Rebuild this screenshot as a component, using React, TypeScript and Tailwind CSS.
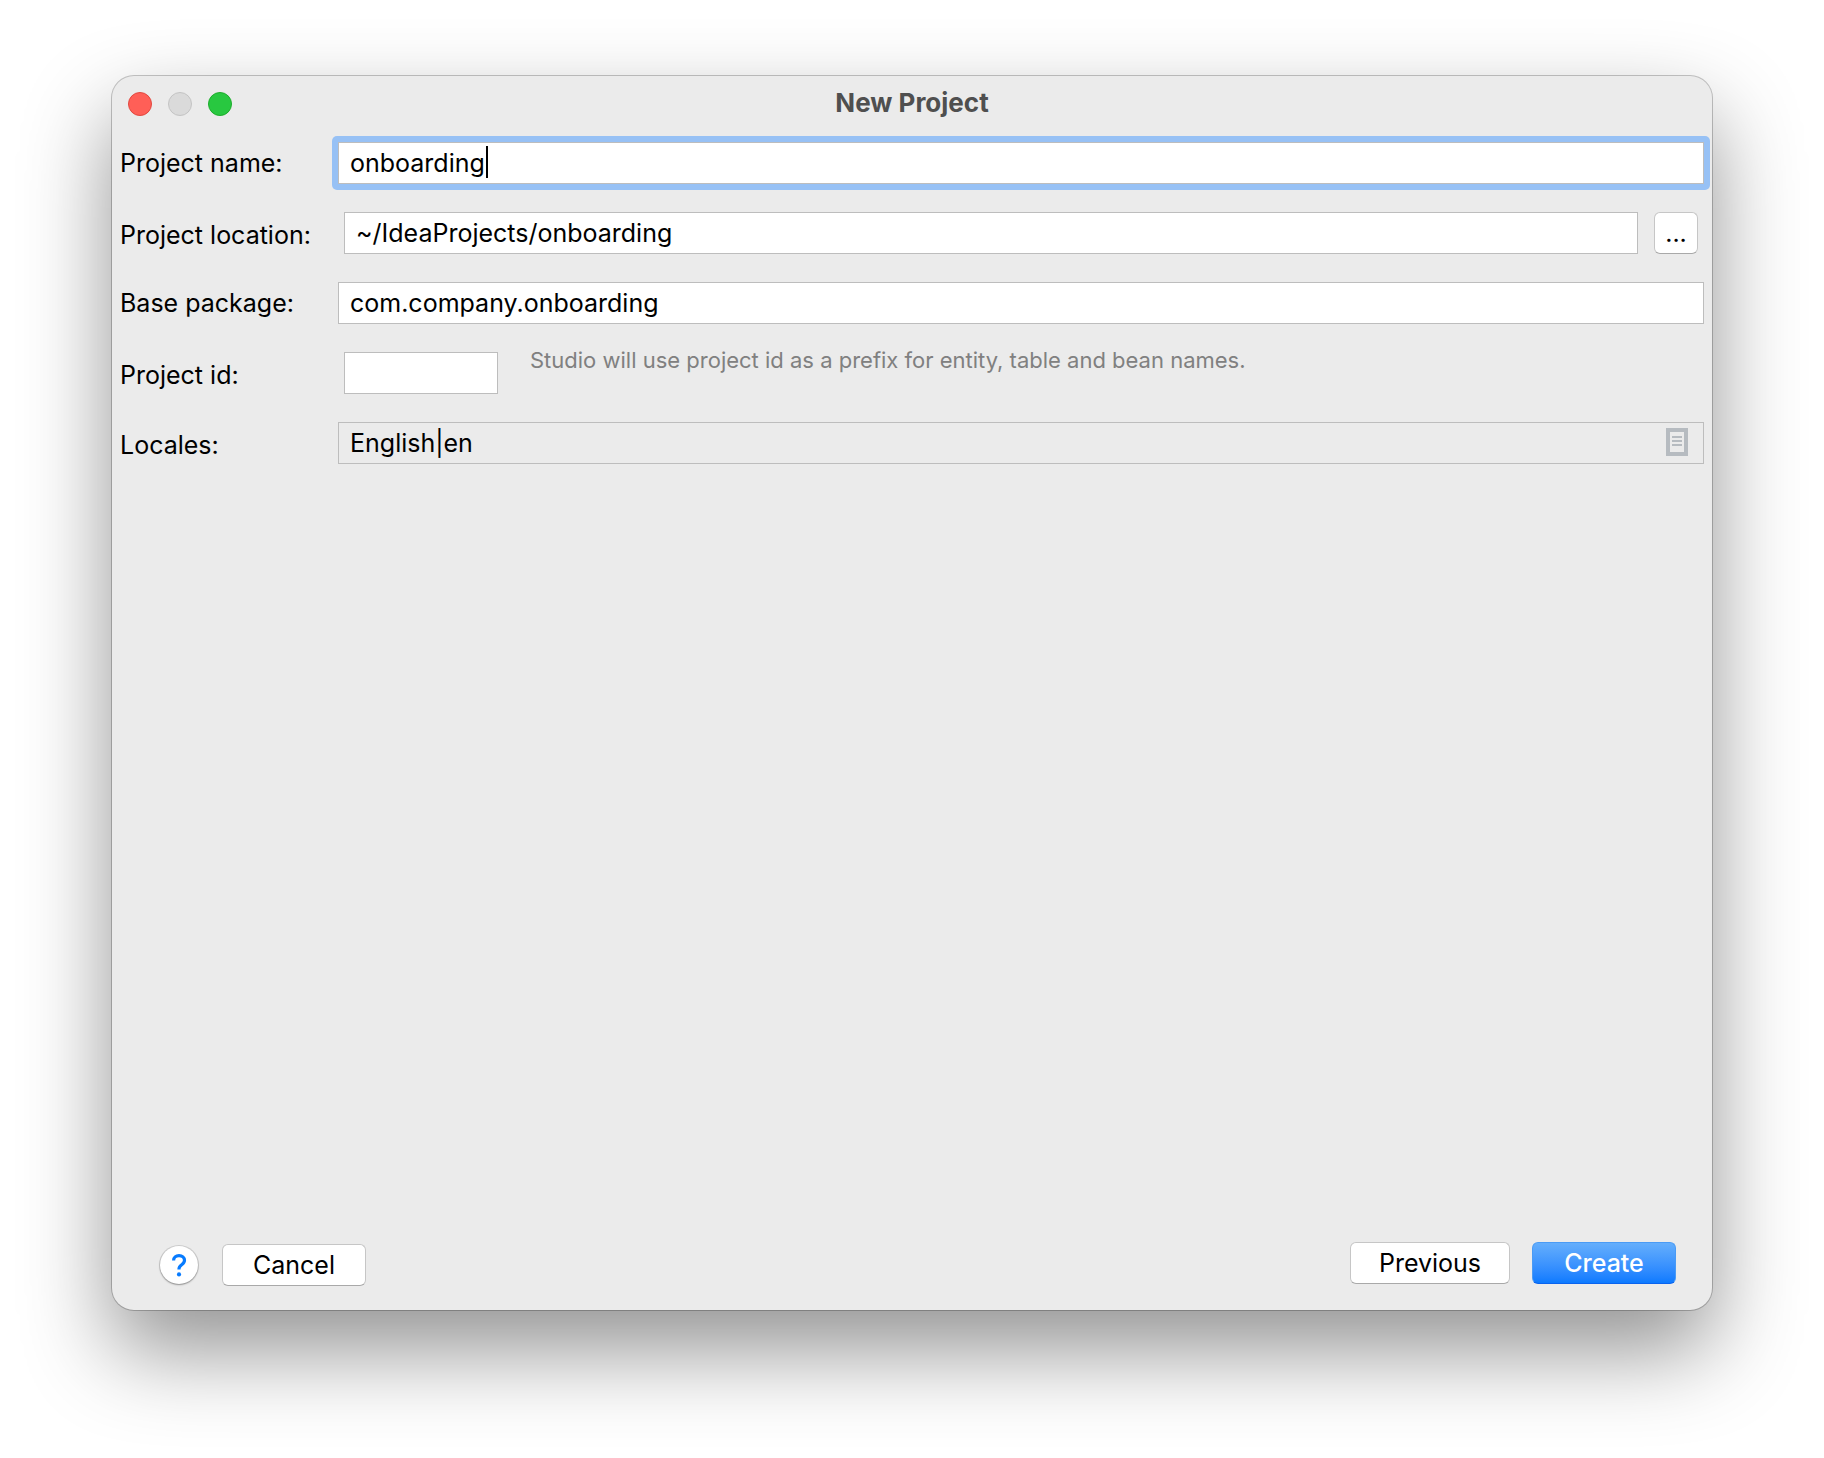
import { useState } from 'react';
import type { ReactNode } from 'react';

interface FormRowProps {
  id: string;
  label: string;
  labelClass?: string;
  children: ReactNode;
}

const fieldClass =
  'h-[42px] min-w-0 rounded-none border border-[#bdbdbd] px-[11px] text-[25px] leading-[30px] text-black outline-none';

const buttonClass =
  'h-[42px] rounded-md border border-[#c6c6c6] border-b-[#a9a9a9] bg-white text-[25px] leading-[30px] text-black';

function FormRow({ id, label, labelClass = '', children }: FormRowProps) {
  return (
    <div className="flex items-center">
      <label htmlFor={id} className={`w-[218px] shrink-0 text-[25px] leading-[30px] ${labelClass}`}>
        {label}
      </label>
      {children}
    </div>
  );
}

function LocalesIcon() {
  return (
    <svg width="22" height="28" viewBox="0 0 22 28" fill="none" aria-hidden="true">
      <rect x="2" y="2" width="18" height="24" stroke="#b6bbc0" strokeWidth="4" />
      <path d="M6 9h10M6 13h10M6 17h10" stroke="#b6bbc0" strokeWidth="2" />
    </svg>
  );
}

export default function App() {
  const [name, setName] = useState('onboarding');
  const [location, setLocation] = useState('~/IdeaProjects/onboarding');
  const [basePackage, setBasePackage] = useState('com.company.onboarding');
  const [projectId, setProjectId] = useState('');

  return (
    <div className="flex min-h-screen flex-col bg-white px-28 pt-[76px] pb-[148px] font-['Inter',sans-serif] text-black">
      <main className="flex flex-1 flex-col rounded-[22px] bg-[#ebebeb] shadow-[0_0_0_1px_rgba(0,0,0,0.22),0_40px_88px_rgba(0,0,0,0.43)]">
        {/* Title bar */}
        <header className="grid h-14 grid-cols-[1fr_auto_1fr] items-center px-4">
          <div className="flex gap-4">
            <button type="button" aria-label="Close" className="size-6 rounded-full border border-[#e2483f] bg-[#ff5f57]" />
            <button type="button" aria-label="Minimize" className="size-6 rounded-full border border-[#c4c4c4] bg-[#dadada]" />
            <button type="button" aria-label="Zoom" className="size-6 rounded-full border border-[#1dad2b] bg-[#28c840]" />
          </div>
          <h1 className="pb-[2px] text-[26px] leading-[30px] font-bold text-[#4f4f4f]">New Project</h1>
        </header>

        {/* Project settings */}
        <form className="flex flex-1 flex-col gap-7 px-2 pt-[10px]">
          <FormRow id="name" label="Project name:">
            <div className="relative -m-[6px] flex min-w-0 flex-1 rounded-[5px] bg-[#97c1f5] p-[6px]">
              <input
                id="name"
                value={name}
                onChange={(e) => setName(e.target.value)}
                className={`${fieldClass} flex-1 bg-white`}
              />
              <span className="absolute top-[10px] left-[154px] h-8 w-[2px] bg-black" />
            </div>
          </FormRow>

          <FormRow id="location" label="Project location:" labelClass="pt-1">
            <div className="flex min-w-0 flex-1 gap-4 px-[6px]">
              <input
                id="location"
                value={location}
                onChange={(e) => setLocation(e.target.value)}
                className={`${fieldClass} flex-1 bg-white`}
              />
              <button type="button" aria-label="Browse" className={`${buttonClass} w-11`}>
                ...
              </button>
            </div>
          </FormRow>

          <FormRow id="package" label="Base package:">
            <input
              id="package"
              value={basePackage}
              onChange={(e) => setBasePackage(e.target.value)}
              className={`${fieldClass} flex-1 bg-white`}
            />
          </FormRow>

          <FormRow id="project-id" label="Project id:" labelClass="pt-1">
            <div className="flex min-w-0 flex-1 items-start gap-8 px-[6px]">
              <input
                id="project-id"
                value={projectId}
                onChange={(e) => setProjectId(e.target.value)}
                className={`${fieldClass} w-[154px] bg-white`}
              />
              <p className="text-[22px] leading-4 text-[#808080]">
                Studio will use project id as a prefix for entity, table and bean names.
              </p>
            </div>
          </FormRow>

          <FormRow id="locales" label="Locales:" labelClass="pt-1">
            <div className="flex h-[42px] min-w-0 flex-1 items-center border border-[#bdbdbd] pr-[15px] pl-[11px]">
              <input
                id="locales"
                readOnly
                value="English|en"
                className="min-w-0 flex-1 bg-transparent text-[25px] leading-[30px] outline-none"
              />
              <button type="button" aria-label="Edit locales" className="pb-[2px]">
                <LocalesIcon />
              </button>
            </div>
          </FormRow>
        </form>

        {/* Actions */}
        <footer className="flex items-start justify-between pr-9 pb-6 pl-12">
          <div className="flex items-center gap-6 pt-[2px]">
            <button
              type="button"
              aria-label="Help"
              className="flex size-[38px] items-center justify-center rounded-full bg-white shadow-[0_0_0_1px_rgba(0,0,0,0.12),0_1px_2px_rgba(0,0,0,0.3)]"
            >
              <svg width="16" height="24" viewBox="0 0 16 24" fill="none" aria-hidden="true">
                <path
                  d="M2.600 7.400C2.600 4.400 4.900 2.600 8 2.600c3.200 0 5.500 1.900 5.500 4.700 0 2.100-1.100 3.200-2.800 4.400-1.900 1.300-2.700 2.200-2.700 4.100v.8"
                  stroke="#077bff"
                  strokeWidth="3.200"
                />
                <circle cx="8" cy="21.400" r="2.100" fill="#077bff" />
              </svg>
            </button>
            <button type="button" className={`${buttonClass} w-36`}>
              Cancel
            </button>
          </div>
          <div className="flex gap-[22px]">
            <button type="button" className={`${buttonClass} w-40`}>
              Previous
            </button>
            <button
              type="button"
              className="h-[42px] w-36 rounded-md border border-[#4a9bf5] border-b-[#0a63ee] bg-linear-to-b from-[#64aefc] to-[#0a7aff] text-[25px] leading-[30px] font-medium text-white"
            >
              Create
            </button>
          </div>
        </footer>
      </main>
    </div>
  );
}
